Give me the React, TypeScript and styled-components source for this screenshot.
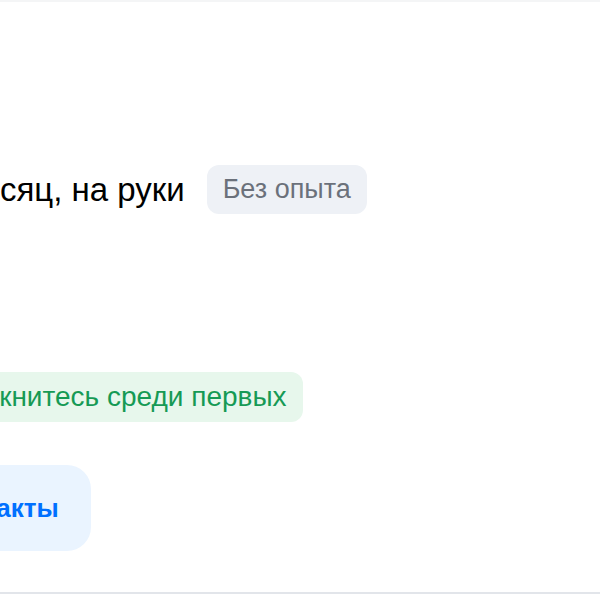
import React from "react";
import styled, { createGlobalStyle } from "styled-components";

const GlobalStyle = createGlobalStyle`
  html, body {
    margin: 0;
    padding: 0;
    background: #ffffff;
    overflow: hidden;
  }
  body {
    font-family: "Liberation Sans", Arial, sans-serif;
    width: 600px;
    height: 600px;
  }
`;

const Page = styled.div`
  width: 600px;
  height: 600px;
  overflow: hidden;
  border-top: 2px solid #f4f5f6;
  box-sizing: border-box;
`;

const Card = styled.section`
  display: flex;
  flex-direction: column;
  align-items: flex-start;
  margin-left: -96px;
  padding: 163px 0 41px;
  border-bottom: 2px solid #e2e5ea;
`;

const SalaryRow = styled.div`
  display: flex;
  align-items: center;
  gap: 22px;
  white-space: nowrap;
`;

const Salary = styled.span`
  font-size: 33px;
  line-height: 40px;
  color: #000000;
`;

const Tag = styled.span<{ $tone: "grey" | "green" }>`
  display: inline-flex;
  align-items: center;
  height: ${(p) => (p.$tone === "green" ? "50px" : "49px")};
  padding: 0 16px;
  border-radius: 12px;
  white-space: nowrap;
  font-size: ${(p) => (p.$tone === "green" ? "28px" : "27px")};
  background: ${(p) => (p.$tone === "green" ? "#e7f7ec" : "#eef1f6")};
  color: ${(p) => (p.$tone === "green" ? "#169a55" : "#6b717b")};
`;

const Highlight = styled.div`
  margin-top: 158px;
`;

const Actions = styled.div`
  display: flex;
  gap: 16px;
  margin-top: 43px;
`;

const SecondaryButton = styled.button`
  height: 86px;
  padding: 0 32px;
  border: none;
  border-radius: 24px;
  background: #eaf4ff;
  color: #0070ff;
  font-family: "Liberation Sans", Arial, sans-serif;
  font-size: 26px;
  font-weight: 700;
  white-space: nowrap;
  cursor: pointer;
`;

export default function App() {
  return (
    <>
      <GlobalStyle />
      <Page>
        <Card>
          <SalaryRow>
            <Salary>₽ в месяц, на руки</Salary>
            <Tag $tone="grey">Без опыта</Tag>
          </SalaryRow>
          <Highlight>
            <Tag $tone="green">Откликнитесь среди первых</Tag>
          </Highlight>
          <Actions>
            <SecondaryButton>Контакты</SecondaryButton>
          </Actions>
        </Card>
      </Page>
    </>
  );
}
